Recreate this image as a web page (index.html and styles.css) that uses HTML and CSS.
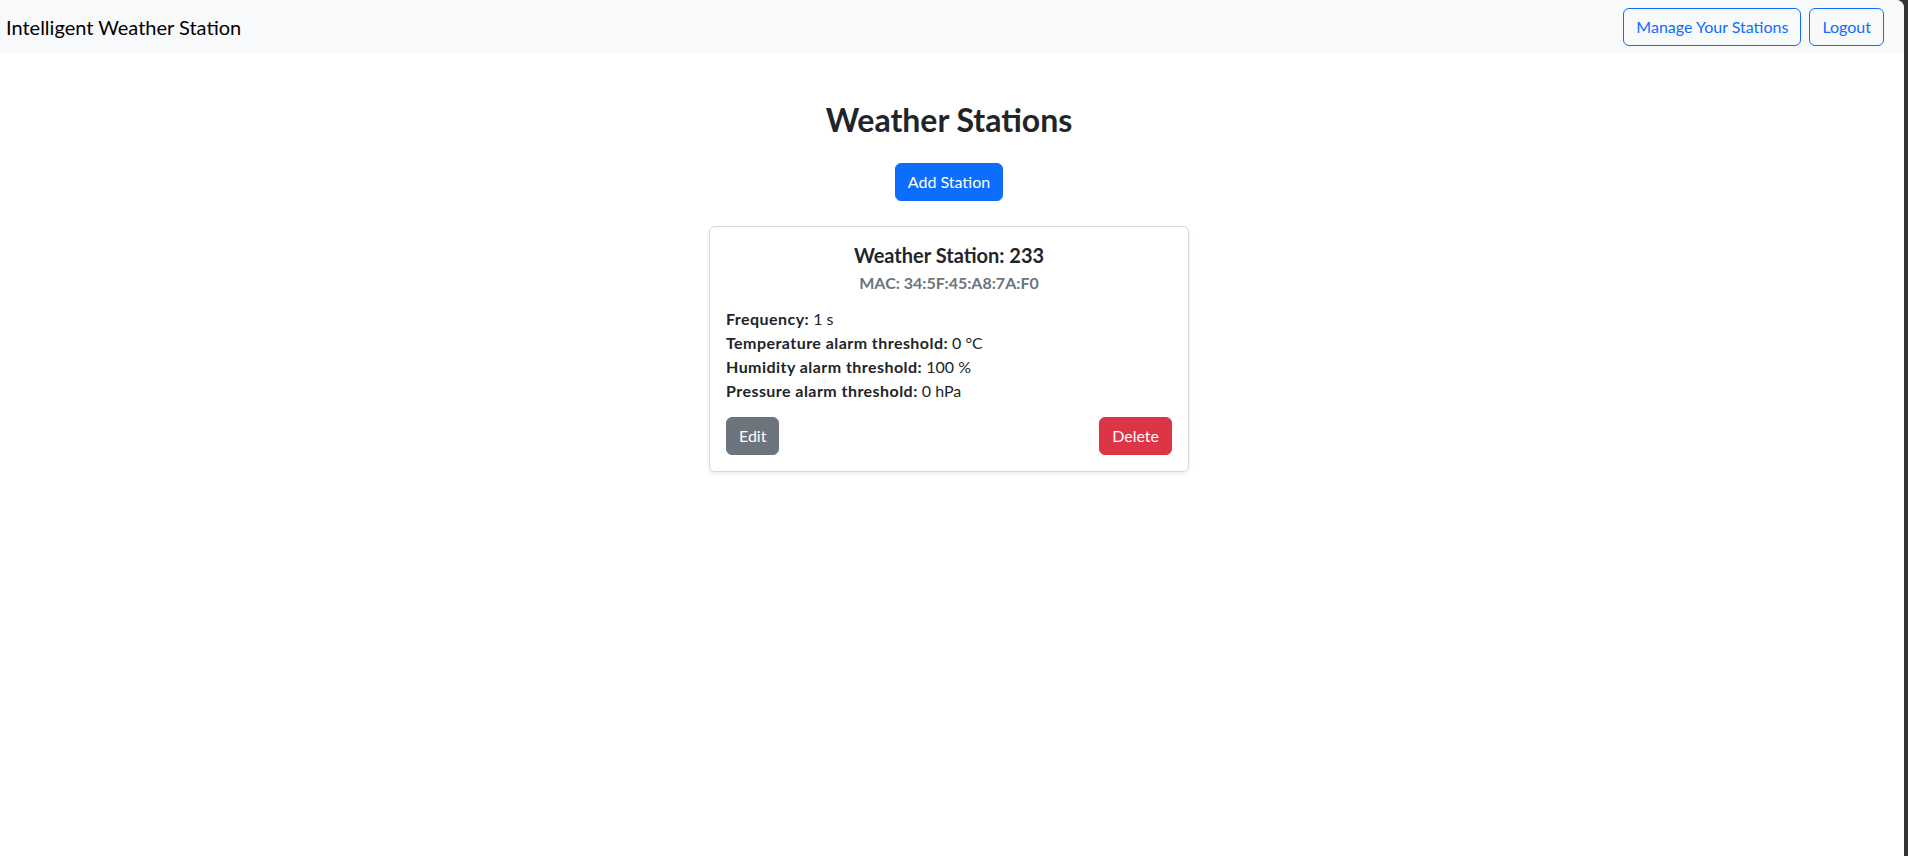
FILE: index.html
```html
<!DOCTYPE html>
<html lang="en">
<head>
<meta charset="utf-8">
<title>Intelligent Weather Station</title>
<link rel="stylesheet" href="styles.css">
</head>
<body>
<div class="window">
  <nav class="navbar">
    <span class="brand">Intelligent Weather Station</span>
    <div class="nav-actions">
      <button class="btn btn-outline">Manage Your Stations</button>
      <button class="btn btn-outline">Logout</button>
    </div>
  </nav>
  <main class="content">
    <h2 class="page-title">Weather Stations</h2>
    <button class="btn btn-primary">Add Station</button>
    <div class="card">
      <h5 class="card-title">Weather Station: 233</h5>
      <h6 class="card-subtitle">MAC: 34:5F:45:A8:7A:F0</h6>
      <div class="fields">
        <p><strong>Frequency:</strong> 1 s</p>
        <p><strong>Temperature alarm threshold:</strong> 0 °C</p>
        <p><strong>Humidity alarm threshold:</strong> 100 %</p>
        <p><strong>Pressure alarm threshold:</strong> 0 hPa</p>
      </div>
      <div class="card-actions">
        <button class="btn btn-secondary">Edit</button>
        <button class="btn btn-danger">Delete</button>
      </div>
    </div>
  </main>
</div>
</body>
</html>
```

FILE: styles.css
```css
* { box-sizing: border-box; }
html, body {
  margin: 0;
  height: 100%;
  background: #353535;
}
body {
  font-family: "Lato", "Noto Sans", sans-serif;
  font-size: 16px;
  line-height: 1.5;
  color: #212529;
}
.window {
  width: calc(100% - 4px);
  height: 100%;
  background: #fff;
  border-top-right-radius: 8px;
  overflow: hidden;
}
.navbar {
  display: flex;
  justify-content: space-between;
  align-items: center;
  height: 53px;
  padding: 0 20px 0 6px;
  background: #f8f9fa;
}
.brand {
  font-size: 20px;
  line-height: 30px;
  color: #000;
}
.nav-actions {
  display: flex;
  gap: 8px;
}
.btn {
  font-family: inherit;
  font-size: 16px;
  line-height: 24px;
  padding: 6px 12px;
  border-radius: 6px;
  border: 1px solid transparent;
  cursor: pointer;
}
.btn-outline {
  color: #0d6efd;
  border-color: #0d6efd;
  background: transparent;
}
.btn-primary {
  color: #fff;
  background: #0d6efd;
  border-color: #0d6efd;
}
.btn-secondary {
  color: #fff;
  background: #6c757d;
  border-color: #6c757d;
}
.btn-danger {
  color: #fff;
  background: #dc3545;
  border-color: #dc3545;
}
.content {
  display: flex;
  flex-direction: column;
  align-items: center;
  padding: 48px 6px 0 0;
}
.page-title {
  margin: 0 0 24px;
  font-size: 32px;
  font-weight: 700;
  line-height: 1.2;
}
.card {
  width: 480px;
  margin-top: 25px;
  padding: 16px;
  border: 1px solid #d6d8da;
  border-radius: 6px;
  box-shadow: 0 2px 4px rgba(0, 0, 0, 0.08);
}
.card-title {
  margin: 0 0 6px;
  font-size: 20px;
  font-weight: 700;
  line-height: 1.2;
  text-align: center;
}
.card-subtitle {
  margin: 0 0 14px;
  font-size: 16px;
  font-weight: 700;
  line-height: 1.2;
  color: #6c757d;
  text-align: center;
}
.fields p {
  margin: 0;
  line-height: 24px;
}
.fields strong {
  font-weight: 700;
  letter-spacing: 0.45px;
}
.card-actions {
  display: flex;
  justify-content: space-between;
  margin-top: 14px;
}
```
